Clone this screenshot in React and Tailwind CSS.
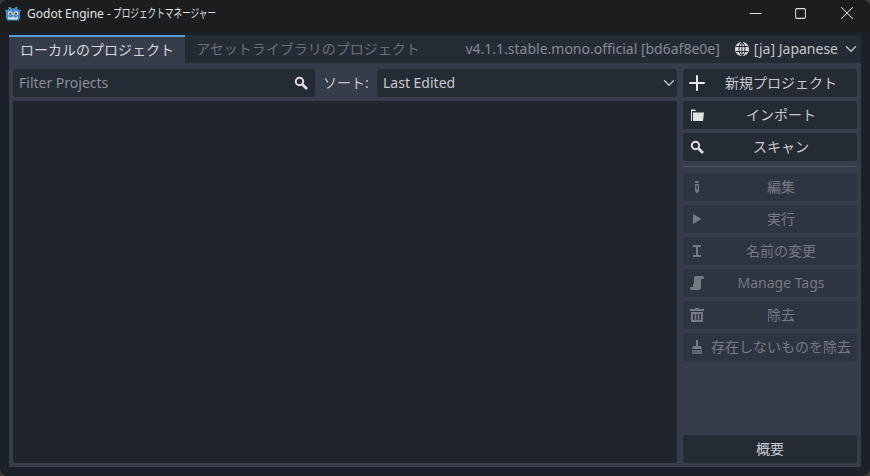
import { ChevronDown, Plus, Minus, Square, X } from "lucide-react";

const font = { fontFamily: '"Noto Sans", "Noto Sans CJK JP", sans-serif' };

const GodotLogo = () => (
  <svg width="16" height="16" viewBox="0 0 16 16">
    <path
      fill="#478cbf"
      d="M5.200.6 6.300 2.200h3.400L10.800.6l2 .7-.4 1.700 1.100.9 1.500-.7 1 1.700-1 1.100v6.200l-1.500 2.200H2.500L1 12.400V6.200L0 5.100l1-1.700 1.500.7 1.100-.9-.4-1.700z"
    />
    <circle cx="5" cy="7.300" r="2.100" fill="#e8f0f6" />
    <circle cx="11" cy="7.300" r="2.100" fill="#e8f0f6" />
    <circle cx="5.200" cy="7.600" r="1.200" fill="#414042" />
    <circle cx="10.800" cy="7.600" r="1.200" fill="#414042" />
    <rect x="7.400" y="7" width="1.200" height="2" rx=".6" fill="#e8f0f6" />
    <path fill="#d5e4ef" d="M3 10.800h1.600v1h2v-1h2.800v1h2v-1H13v1.800l-1 .8H4l-1-.8z" />
  </svg>
);

const FolderIcon = () => (
  <svg width="14" height="14" viewBox="0 0 14 14" fill="#e0e0e0">
    <path d="M1 1.500h4l1.300 1.500H2v10H1z" />
    <path d="M3 4.500h11l-1 8.500H3z" />
  </svg>
);

const SearchIcon = () => (
  <svg width="14" height="14" viewBox="0 0 14 14" fill="none" stroke="#e0e0e0">
    <circle cx="5.500" cy="5.500" r="3.700" strokeWidth="2" />
    <path d="M8.500 8.500 13 13" strokeWidth="2.600" />
  </svg>
);

const GlobeIcon = () => (
  <svg width="14" height="14" viewBox="0 0 14 14" className="mr-[5px]">
    <circle cx="7" cy="7" r="7" fill="#e0e0e0" />
    <g fill="none" stroke="#252b35" strokeWidth="1">
      <ellipse cx="7" cy="7" rx="3" ry="6.500" />
      <path d="M7 0v14M1 4.500h12M1 9.500h12" />
    </g>
  </svg>
);

const PencilIcon = () => (
  <svg width="14" height="14" viewBox="0 0 14 14" fill="currentColor">
    <rect x="5" y="1" width="4" height="2" rx="1" />
    <path d="M5 4h4v7l-2 2.500L5 11zM6.300 5.500v4h1.400v-4z" fillRule="evenodd" />
  </svg>
);

const PlayIcon = () => (
  <svg width="14" height="14" viewBox="0 0 14 14" fill="currentColor">
    <path d="M3 2l8.500 5L3 12z" />
  </svg>
);

const RenameIcon = () => (
  <svg width="14" height="14" viewBox="0 0 14 14" fill="currentColor">
    <path d="M3 1h8v2H8v8h3v2H3v-2h3V3H3z" />
  </svg>
);

const ScrollIcon = () => (
  <svg width="14" height="14" viewBox="0 0 14 14" fill="currentColor" className="-ml-[1px]">
    <path d="M5.500 0H12.500C13.600 0 14 1 13.800 3H11V11C11 12.800 10 14 8.500 14H1.500C.4 14 0 13 .2 11H3V8.500L4 7V2C4 1 4.500 0 5.500 0z" />
  </svg>
);

const TrashIcon = () => (
  <svg width="14" height="14" viewBox="0 0 14 14" fill="currentColor" className="-ml-[1px]">
    <path d="M5 0h4v1h5v2H0V1h5z" />
    <path d="M1 4h12v10H1zM3 6v6h1.700V6zM6.200 6v6h1.600V6zM9.300 6v6H11V6z" fillRule="evenodd" />
  </svg>
);

const BroomIcon = () => (
  <svg width="14" height="14" viewBox="0 0 14 14" fill="currentColor" className="-ml-[1px]">
    <rect x="6" y="0" width="2" height="6" />
    <path d="M3 6h8l1 3H2z" />
    <path d="M2 10h10v4H2z" opacity=".7" />
  </svg>
);

const SideButton = ({ icon, label, disabled }) => (
  <button
    className={`flex h-7 w-full items-center rounded-[3px] pb-[2px] text-[14px] ${
      disabled ? "bg-[#2e3440] text-[#757a84]" : "bg-[#252b35] text-[#c8c9cc]"
    }`}
  >
    <span className="flex w-7 shrink-0 items-center justify-center pt-[2px]">{icon}</span>
    <span className="flex-1 whitespace-nowrap pr-[6px] text-center">{label}</span>
  </button>
);

export default function App() {
  return (
    <div className="h-[476px] w-[870px] overflow-hidden bg-[#3a3b3d]">
      <div style={font} className="flex h-[476px] w-[870px] flex-col overflow-hidden rounded-[8px] bg-[#1c2027]">
        <div className="flex h-8 shrink-0 justify-between bg-[#1c1d1f] pl-[5px]">
          <div className="flex h-[27px] items-center gap-[6px]">
            <GodotLogo />
            <span className="whitespace-nowrap text-[12px] text-[#e0e0e0]">
              Godot Engine -{" "}
              <span className="-ml-[1px] inline-block origin-left scale-x-[0.72]">プロジェクトマネージャー</span>
            </span>
          </div>
          <div className="flex h-[26px] items-center text-[#e0e0e0]">
            <span className="flex w-[46px] items-center justify-center">
              <Minus size={19} strokeWidth={1.26} />
            </span>
            <span className="flex w-[46px] items-center justify-center pr-[2px]">
              <Square size={13} strokeWidth={1.85} />
            </span>
            <span className="flex w-[46px] items-center justify-center">
              <X size={22} strokeWidth={1.1} />
            </span>
          </div>
        </div>

        <div className="flex flex-1 flex-col pb-[9px] pl-[9px] pr-[9px] pt-[3px]">
          <div className="flex h-7 shrink-0 items-stretch bg-[#252b35]">
            <div className="flex w-[176px] items-center justify-center border-t-2 border-[#5a9bd0] bg-[#363d4a] pb-[2px] text-[14px] text-[#d4d5d8]">
              ローカルのプロジェクト
            </div>
            <div className="flex w-[246px] items-center justify-center pb-[1px] text-[14px] text-[#6b6f77]">
              アセットライブラリのプロジェクト
            </div>
            <div className="flex flex-1 items-center justify-end text-[14px] text-[#868a92]">
              <span className="mr-[15px] pb-[1px]">v4.1.1.stable.mono.official [bd6af8e0e]</span>
              <GlobeIcon />
              <span className="pb-[1px] text-[#c4c6ca]">[ja] Japanese</span>
              <ChevronDown size={18} className="ml-[4px] mr-[1px] text-[#b8bbc0]" strokeWidth={2} />
            </div>
          </div>

          <div className="flex flex-1 gap-[6px] bg-[#363d4a] px-1 pb-1 pt-[6px]">
            <div className="flex w-[664px] flex-col gap-1">
              <div className="flex h-7 shrink-0 items-center">
                <div className="flex h-7 w-[302px] items-center justify-between rounded-[3px] bg-[#252b35] pb-[2px] pl-[6px] pr-[7px] text-[14px] text-[#8b8e95]">
                  Filter Projects
                  <span className="pt-[2px]">
                    <SearchIcon />
                  </span>
                </div>
                <span className="w-[62px] pb-[2px] pl-2 text-[14px] text-[#c8cacd]">ソート:</span>
                <div className="flex h-7 w-[300px] items-center justify-between rounded-[3px] bg-[#252b35] pb-[2px] pl-[6px] text-[14px] text-[#c8cacd]">
                  Last Edited
                  <ChevronDown size={18} strokeWidth={2} className="mr-[-1px] mt-[2px] text-[#b8bbc0]" />
                </div>
              </div>
              <div className="flex-1 rounded-[2px] bg-[#20242c]" />
            </div>

            <div className="flex w-[174px] flex-col">
              <div className="flex flex-col gap-1">
                <SideButton icon={<Plus size={24} strokeWidth={2} className="text-[#e8e8e8]" />} label="新規プロジェクト" />
                <SideButton icon={<FolderIcon />} label="インポート" />
                <SideButton icon={<SearchIcon />} label="スキャン" />
              </div>
              <div className="mb-[6px] mt-[5px] h-px bg-[#4d5361]" />
              <div className="flex flex-col gap-1">
                <SideButton disabled icon={<PencilIcon />} label="編集" />
                <SideButton disabled icon={<PlayIcon />} label="実行" />
                <SideButton disabled icon={<RenameIcon />} label="名前の変更" />
                <SideButton disabled icon={<ScrollIcon />} label="Manage Tags" />
                <SideButton disabled icon={<TrashIcon />} label="除去" />
                <SideButton disabled icon={<BroomIcon />} label="存在しないものを除去" />
              </div>
              <div className="mt-auto">
                <button className="h-7 w-full rounded-[3px] bg-[#252b35] pb-[2px] text-[14px] text-[#c8cacd]">概要</button>
              </div>
            </div>
          </div>
        </div>
      </div>
    </div>
  );
}
